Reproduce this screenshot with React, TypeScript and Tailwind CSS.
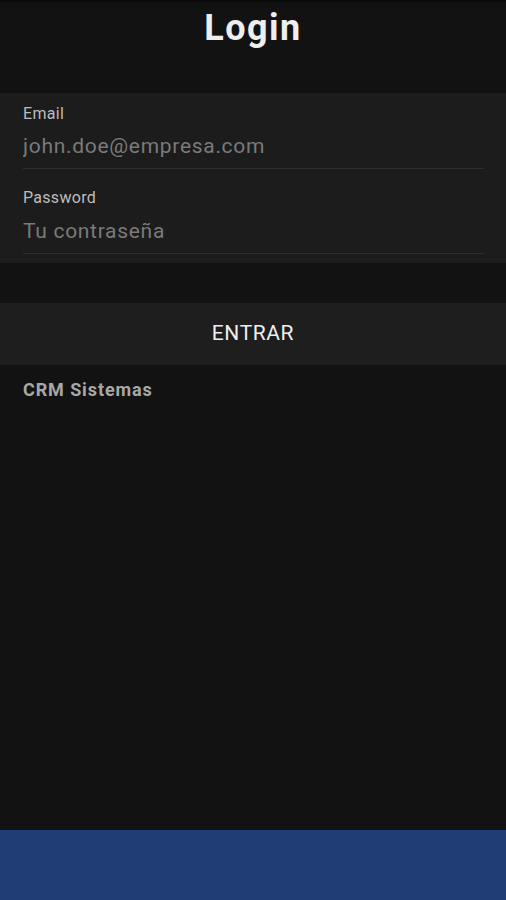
export default function App() {
  return (
    <div className="flex h-[900px] w-full flex-col bg-[#121212] font-['Roboto',sans-serif]">
      <div className="h-[2px] bg-[#0a0a0a]" />
      <header className="flex h-[91px] justify-center pt-[4px]">
        <h1 className="text-[36px] font-bold leading-[44px] tracking-[1.5px] text-[#eeeeee]">Login</h1>
      </header>

      <form className="bg-[#1c1c1c] px-[23px] pb-[9px] pt-[11px]">
        <label className="block text-[16px] leading-[20px] tracking-[0.3px] text-[#bdbdbd]">Email</label>
        <input
          type="email"
          placeholder="john.doe@empresa.com"
          className="block h-[45px] w-[461px] border-b border-[#2e2e2e] bg-transparent text-[21px] tracking-[0.7px] text-[#ddd] outline-none placeholder:text-[#7a7a7a]"
        />
        <label className="mt-[19px] block text-[16px] leading-[20px] tracking-[0.3px] text-[#bdbdbd]">Password</label>
        <input
          type="password"
          placeholder="Tu contraseña"
          className="block h-[46px] w-[461px] border-b border-[#2e2e2e] bg-transparent text-[21px] tracking-[0.7px] text-[#ddd] outline-none placeholder:text-[#7a7a7a]"
        />
      </form>

      <div className="h-[40px]" />

      <button className="h-[62px] w-full bg-[#1e1e1e] text-[21px] tracking-[0.6px] text-[#eeeeee]">
        ENTRAR
      </button>

      <div className="flex-1 px-[23px] pt-[14px]">
        <p className="text-[18px] font-bold leading-[22px] tracking-[0.9px] text-[#a8a8a8]">CRM Sistemas</p>
      </div>

      <footer className="h-[70px] bg-[#203d75]" />
    </div>
  );
}
